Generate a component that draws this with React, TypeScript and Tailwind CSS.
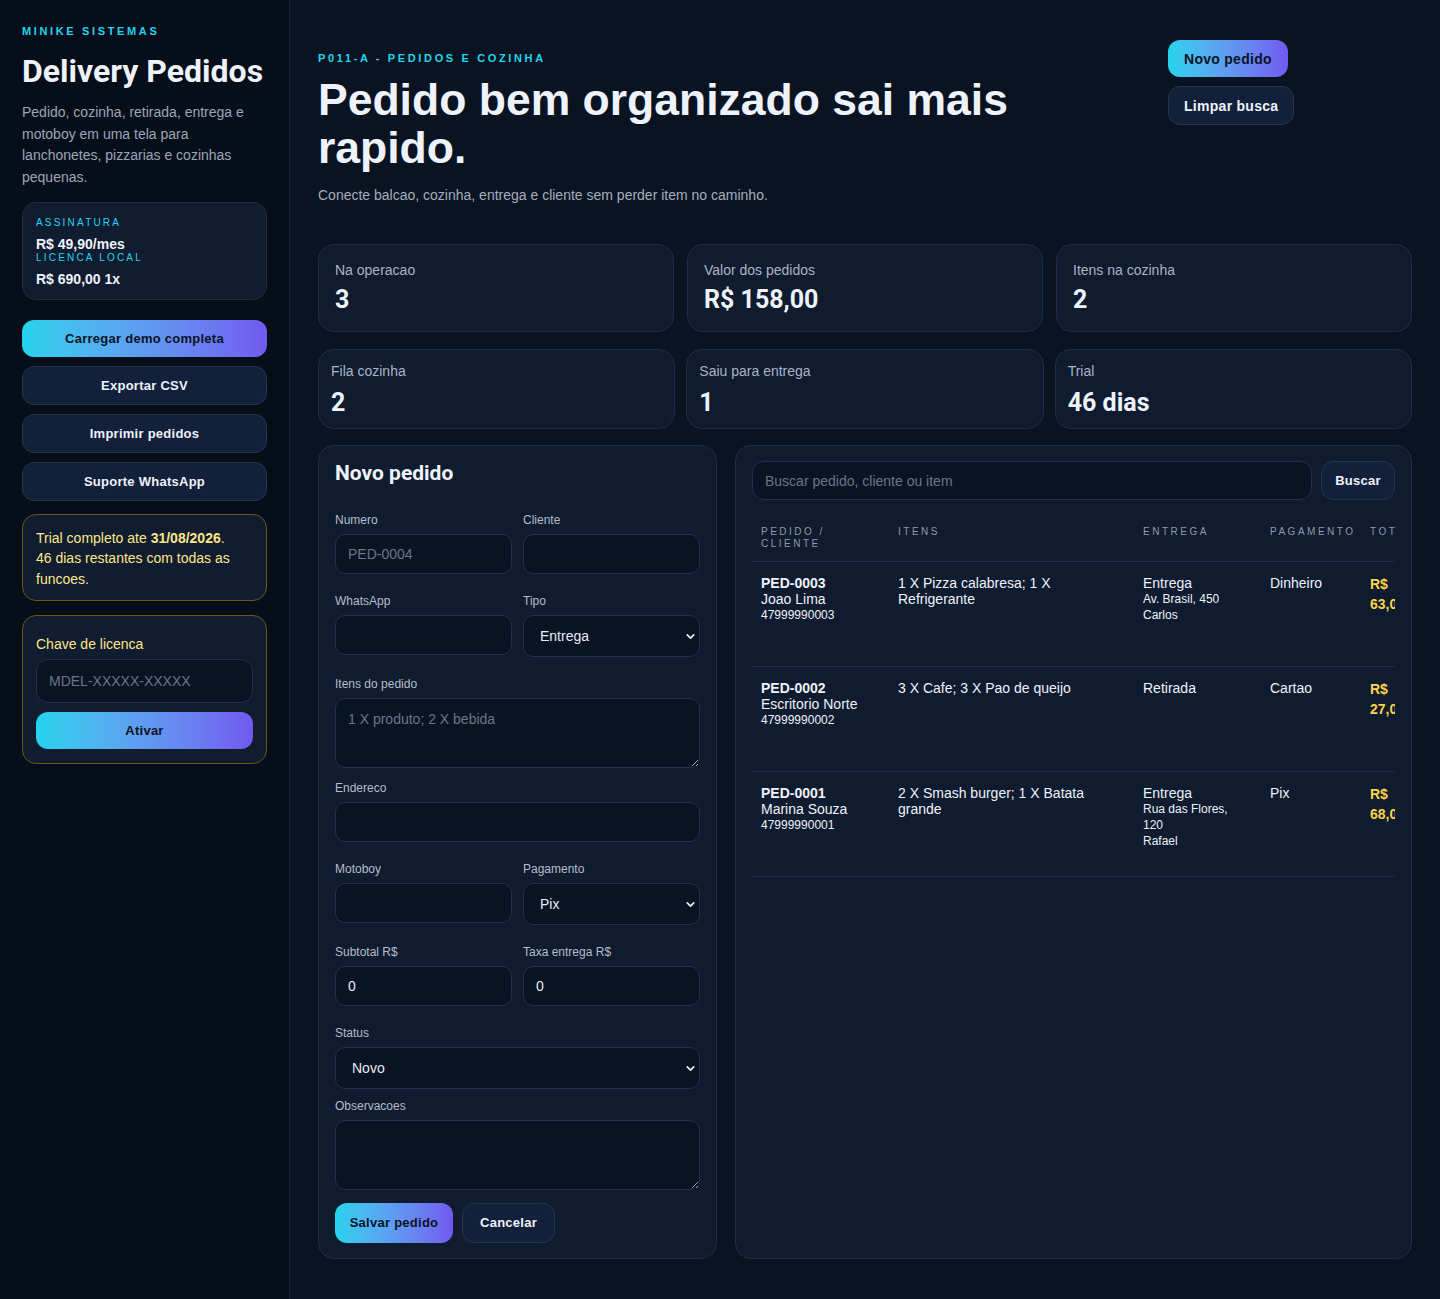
import { ChevronDown } from "lucide-react";

const gradBtn =
  "rounded-[12px] bg-gradient-to-r from-[#22d3ee] to-[#7159f0] font-bold tracking-[0.02em] text-[#0b1424]";
const darkBtn =
  "rounded-[12px] border border-[#24344e] bg-[#13203a] font-bold tracking-[0.02em] text-[#eef2fb]";
const card = "rounded-[16px] border border-[#1e2e47] bg-[#0f1b2e]";
const field =
  "w-full rounded-[10px] border border-[#213250] bg-[#081424] text-sm text-[#e6ebf4] placeholder:text-[#6b7586] outline-none";

const stats1 = [
  { label: "Na operacao", value: "3" },
  { label: "Valor dos pedidos", value: "R$ 158,00" },
  { label: "Itens na cozinha", value: "2" },
];
const stats2 = [
  { label: "Fila cozinha", value: "2" },
  { label: "Saiu para entrega", value: "1" },
  { label: "Trial", value: "46 dias" },
];

const orders = [
  {
    id: "PED-0003",
    client: "Joao Lima",
    phone: "47999990003",
    items: "1 X Pizza calabresa; 1 X Refrigerante",
    type: "Entrega",
    address: "Av. Brasil, 450",
    driver: "Carlos",
    pay: "Dinheiro",
    total: "R$ 63,00",
  },
  {
    id: "PED-0002",
    client: "Escritorio Norte",
    phone: "47999990002",
    items: "3 X Cafe; 3 X Pao de queijo",
    type: "Retirada",
    address: "",
    driver: "",
    pay: "Cartao",
    total: "R$ 27,00",
  },
  {
    id: "PED-0001",
    client: "Marina Souza",
    phone: "47999990001",
    items: "2 X Smash burger; 1 X Batata grande",
    type: "Entrega",
    address: "Rua das Flores, 120",
    driver: "Rafael",
    pay: "Pix",
    total: "R$ 68,00",
  },
];

function Label({ children }: { children: React.ReactNode }) {
  return <div className="mb-[6px] text-xs leading-4 text-[#b4bdcc]">{children}</div>;
}

function Select({ value }: { value: string }) {
  return (
    <div className="relative">
      <select defaultValue={value} className={`${field} h-[42px] appearance-none pl-4`}>
        <option>{value}</option>
      </select>
      <ChevronDown
        size={13}
        strokeWidth={3.2}
        className="pointer-events-none absolute right-[3px] top-[15px] text-[#e6ebf4]"
      />
    </div>
  );
}

// table columns, the last one gets clipped by the panel like in the app
const cols = "grid grid-cols-[137px_245px_127px_100px_60px]";

export default function App() {
  return (
    <div className="flex min-h-[1299px] bg-[#091321] font-['Liberation_Sans',Arial,sans-serif] text-[#eef2fb]">
      <aside className="w-[290px] shrink-0 border-r border-[#172234] bg-[#060e1a] px-[22px] pt-6">
        <div className="text-[11px] font-bold leading-[14px] tracking-[0.24em] text-[#22d3ee]">
          MINIKE SISTEMAS
        </div>
        <h2 className="mt-[13px] font-['Roboto',sans-serif] text-[32px] font-bold leading-10">
          Delivery Pedidos
        </h2>
        <p className="mt-[11px] text-sm leading-[21.7px] text-[#9ba6b8]">
          Pedido, cozinha, retirada, entrega e motoboy em uma tela para lanchonetes, pizzarias e
          cozinhas pequenas.
        </p>

        <div className="mt-[13px] rounded-[14px] border border-[#1e2e47] bg-[#101c2f] px-[13px] pb-[12px] pt-[13px]">
          <div className="text-[10px] leading-[14px] tracking-[0.22em] text-[#22d3ee]">ASSINATURA</div>
          <div className="mt-[6px] text-sm font-bold leading-4">R$ 49,90/mes</div>
          <div className="text-[10px] leading-3 tracking-[0.22em] text-[#22d3ee]">LICENCA LOCAL</div>
          <div className="mt-[7px] text-sm font-bold leading-4">R$ 690,00 1x</div>
        </div>

        <div className="mt-[20px] flex flex-col gap-[9px] text-[13px]">
          <button className={`${gradBtn} h-[37px]`}>Carregar demo completa</button>
          <button className={`${darkBtn} h-[39px]`}>Exportar CSV</button>
          <button className={`${darkBtn} h-[39px]`}>Imprimir pedidos</button>
          <button className={`${darkBtn} h-[39px]`}>Suporte WhatsApp</button>
        </div>

        <div className="mt-[13px] rounded-[14px] border border-[#6e5713] bg-[#101c2f] px-[13px] pb-[11px] pt-[13px] text-sm leading-[20.5px] text-[#fde68a]">
          Trial completo ate <b>31/08/2026</b>.
          <br />
          46 dias restantes com todas as funcoes.
        </div>

        <div className="mt-[14px] rounded-[14px] border border-[#6e5713] bg-[#101c2f] px-[13px] pb-[14px] pt-[18px]">
          <div className="mb-[5px] text-sm leading-5 text-[#fde68a]">Chave de licenca</div>
          <input
            className={`${field} h-[44px] rounded-[12px] px-3`}
            placeholder="MDEL-XXXXX-XXXXX"
          />
          <button className={`${gradBtn} mt-[9px] h-[37px] w-full text-[13px]`}>Ativar</button>
        </div>
      </aside>

      <main className="min-w-0 flex-1 px-[28px] pb-10 pt-10">
        <header className="flex items-start justify-between">
          <div className="pt-[10px]">
            <div className="text-[11px] font-bold leading-4 tracking-[0.24em] text-[#22d3ee]">
              P011-A - PEDIDOS E COZINHA
            </div>
            <h1 className="mt-[10px] max-w-[790px] text-[44.5px] font-bold leading-[48px] text-[#eef2fb]">
              Pedido bem organizado sai mais rapido.
            </h1>
            <p className="mt-[13px] text-sm leading-5 text-[#a4aebf]">
              Conecte balcao, cozinha, entrega e cliente sem perder item no caminho.
            </p>
          </div>
          <div className="flex w-[244px] shrink-0 flex-col items-start gap-[9px] text-sm">
            <button className={`${gradBtn} h-[37px] px-4`}>Novo pedido</button>
            <button className={`${darkBtn} h-[39px] px-[15px]`}>Limpar busca</button>
          </div>
        </header>

        <div className="mt-[39px] grid grid-cols-3 gap-[13px]">
          {stats1.map((s) => (
            <div key={s.label} className={`${card} h-[88px] p-4`}>
              <div className="text-sm leading-[18px] text-[#a9b4c6]">{s.label}</div>
              <div className="mt-[7px] font-['Roboto',sans-serif] text-[25px] font-bold leading-7">
                {s.value}
              </div>
            </div>
          ))}
        </div>
        <div className="mt-[17px] grid grid-cols-3 gap-[11px]">
          {stats2.map((s) => (
            <div key={s.label} className={`${card} h-[80px] p-3`}>
              <div className="text-sm leading-[18px] text-[#a9b4c6]">{s.label}</div>
              <div className="mt-[9px] font-['Roboto',sans-serif] text-[25px] font-bold leading-7">
                {s.value}
              </div>
            </div>
          ))}
        </div>

        <div className="mt-[16px] grid grid-cols-[399px_minmax(0,1fr)] gap-[18px]">
          <section className={`${card} h-[814px] px-4 pt-[15px]`}>
            <h3 className="font-['Roboto',sans-serif] text-[21px] font-bold leading-6">Novo pedido</h3>

            <div className="mt-[27px] grid grid-cols-2 gap-x-[11px]">
              <div>
                <Label>Numero</Label>
                <input className={`${field} h-10 px-3`} placeholder="PED-0004" />
              </div>
              <div>
                <Label>Cliente</Label>
                <input className={`${field} h-10 px-3`} />
              </div>
            </div>

            <div className="mt-[19px] grid grid-cols-2 gap-x-[11px]">
              <div>
                <Label>WhatsApp</Label>
                <input className={`${field} h-10 px-3`} />
              </div>
              <div>
                <Label>Tipo</Label>
                <Select value="Entrega" />
              </div>
            </div>

            <div className="mt-[19px]">
              <Label>Itens do pedido</Label>
              <textarea
                className={`${field} block h-[70px] px-3 py-[10px]`}
                placeholder="1 X produto; 2 X bebida"
              />
            </div>

            <div className="mt-[12px]">
              <Label>Endereco</Label>
              <input className={`${field} h-10 px-3`} />
            </div>

            <div className="mt-[19px] grid grid-cols-2 gap-x-[11px]">
              <div>
                <Label>Motoboy</Label>
                <input className={`${field} h-10 px-3`} />
              </div>
              <div>
                <Label>Pagamento</Label>
                <Select value="Pix" />
              </div>
            </div>

            <div className="mt-[19px] grid grid-cols-2 gap-x-[11px]">
              <div>
                <Label>Subtotal R$</Label>
                <input className={`${field} h-10 px-3`} defaultValue="0" />
              </div>
              <div>
                <Label>Taxa entrega R$</Label>
                <input className={`${field} h-10 px-3`} defaultValue="0" />
              </div>
            </div>

            <div className="mt-[19px]">
              <Label>Status</Label>
              <Select value="Novo" />
            </div>

            <div className="mt-[9px]">
              <Label>Observacoes</Label>
              <textarea className={`${field} block h-[70px] px-3 py-[10px]`} />
            </div>

            <div className="mt-[13px] flex gap-[9px] text-[13px]">
              <button className={`${gradBtn} h-10 w-[118px]`}>Salvar pedido</button>
              <button className={`${darkBtn} h-10 w-[93px]`}>Cancelar</button>
            </div>
          </section>

          <section className={`${card} h-[814px] min-w-0 px-4 pt-[15px]`}>
            <div className="flex gap-[9px]">
              <input
                className={`${field} h-[39px] min-w-0 flex-1 rounded-[12px] px-3`}
                placeholder="Buscar pedido, cliente ou item"
              />
              <button className={`${darkBtn} h-[39px] w-[74px] shrink-0 text-[13px]`}>Buscar</button>
            </div>

            <div className="mt-[15px] overflow-hidden">
              <div
                className={`${cols} w-[669px] border-b border-[#1e2e47] py-[11px] text-[10px] leading-3 tracking-[0.25em] text-[#8e9aac]`}
              >
                <div className="px-[9px]">PEDIDO / CLIENTE</div>
                <div className="px-[9px]">ITENS</div>
                <div className="px-[9px]">ENTREGA</div>
                <div className="px-[9px]">PAGAMENTO</div>
                <div className="px-[9px]">TOTAL</div>
              </div>
              {orders.map((o) => (
                <div
                  key={o.id}
                  className={`${cols} h-[105px] w-[669px] border-b border-[#1e2e47] pt-[13px] text-sm leading-4`}
                >
                  <div className="px-[9px]">
                    <div className="font-bold">{o.id}</div>
                    <div>{o.client}</div>
                    <div className="text-xs leading-4">{o.phone}</div>
                  </div>
                  <div className="pl-[9px] pr-[30px]">{o.items}</div>
                  <div className="pl-[9px] pr-[18px]">
                    <div>{o.type}</div>
                    {o.address && <div className="text-xs leading-4">{o.address}</div>}
                    {o.driver && <div className="text-xs leading-4">{o.driver}</div>}
                  </div>
                  <div className="px-[9px]">{o.pay}</div>
                  <div className="-mt-[1px] px-[9px] font-bold leading-5 text-[#fcd34d]">{o.total}</div>
                </div>
              ))}
            </div>
          </section>
        </div>
      </main>
    </div>
  );
}
